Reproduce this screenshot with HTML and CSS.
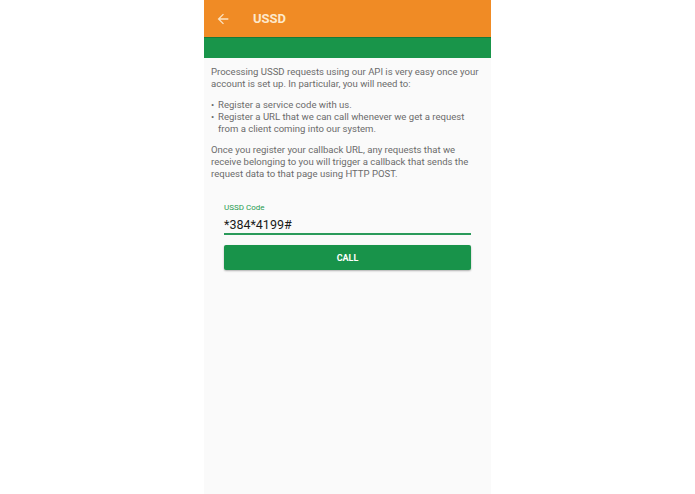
FILE: index.html
```html
<!DOCTYPE html>
<html>
<head>
<meta charset="utf-8">
<link rel="stylesheet" href="styles.css">
</head>
<body>
<div class="phone">
  <header class="appbar">
    <svg class="back" width="16" height="16" viewBox="0 0 24 24"><path d="M20 11H7.83l5.59-5.59L12 4l-8 8 8 8 1.41-1.41L7.83 13H20v-2z" fill="#fbe3c4"/></svg>
    <span class="title">USSD</span>
  </header>
  <div class="tabbar"></div>
  <main class="content">
    <p class="para">Processing USSD requests using our API is very easy once your account is set up. In particular, you will need to:</p>
    <ul class="list">
      <li>Register a service code with us.</li>
      <li>Register a URL that we can call whenever we get a request from a client coming into our system.</li>
    </ul>
    <p class="para">Once you register your callback URL, any requests that we receive belonging to you will trigger a callback that sends the request data to that page using HTTP POST.</p>
    <div class="form">
      <label class="label">USSD Code</label>
      <div class="input">*384*4199#</div>
      <button class="btn">CALL</button>
    </div>
  </main>
</div>
</body>
</html>
```
FILE: styles.css
```css
html, body { margin: 0; padding: 0; background: #ffffff; }
body { font-family: Roboto, "Noto Sans", sans-serif; }
.phone {
  width: 287px;
  height: 494px;
  margin-left: 204px;
  background: #fafafa;
  display: flex;
  flex-direction: column;
}
.appbar {
  height: 37px;
  background: #f08b25;
  display: flex;
  align-items: center;
  box-sizing: border-box;
  padding-left: 11px;
}
.back { margin-right: 22px; }
.title { color: #fde9cc; font-weight: 700; font-size: 13px; }
.tabbar { height: 21px; background: #19954a; border-top: 1px solid #157a3a; box-sizing: border-box; }
.content { padding: 8px 10px 0 7px; color: #6b6b6b; font-size: 9.55px; line-height: 12px; }
.para { margin: 0 0 9px 0; }
.list { margin: 0 0 9px 0; padding: 0; list-style: none; }
.list li { position: relative; padding-left: 7px; }
.list li::before { content: "•"; position: absolute; left: 0; }
.form { padding: 14px 10px 0 13px; display: flex; flex-direction: column; }
.label { color: #1f9a50; font-size: 8px; line-height: 10px; }
.input { color: #1a1a1a; font-size: 12.5px; line-height: 15px; padding-top: 4px; padding-bottom: 1px; border-bottom: 2px solid #2a9a5a; }
.btn {
  margin-top: 10px;
  height: 25px;
  background: #18934a;
  border: none;
  border-radius: 2px;
  color: #ffffff;
  font-family: Roboto, sans-serif;
  font-weight: 700;
  font-size: 9px;
  box-shadow: 0 1px 2px rgba(0,0,0,0.3);
  padding: 0;
}
```
